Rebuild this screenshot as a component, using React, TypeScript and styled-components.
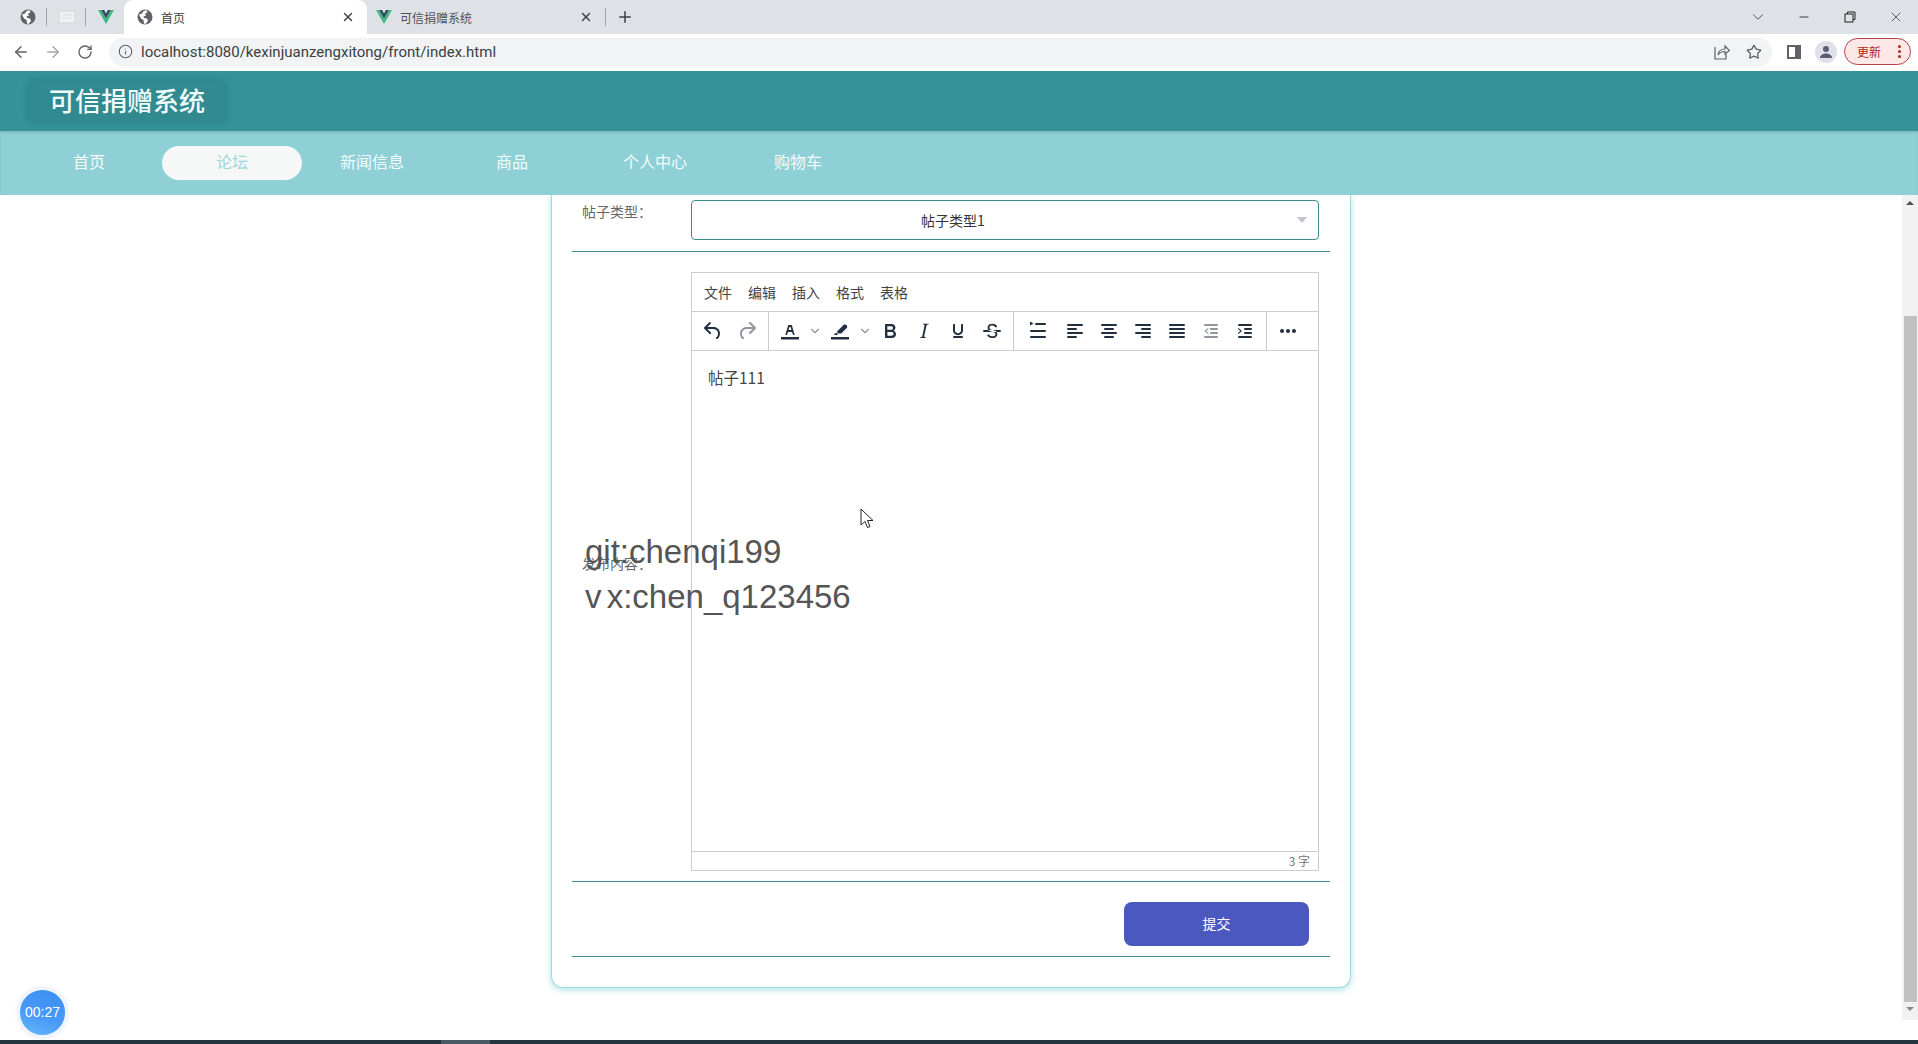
import React, { FunctionComponent, ReactElement } from 'react';
import styled, { createGlobalStyle } from 'styled-components';
import { ArrowLeft, ArrowRight, Info, Minus, Plus, RotateCw, Star, X, ChevronDown } from 'lucide-react';

const GlobalStyle = createGlobalStyle`
    html, body {
        margin: 0;
        padding: 0;
        background: #fff;
        overflow: hidden;
    }
    * {
        box-sizing: border-box;
    }
    #root {
        font-family: 'Noto Sans CJK SC', 'Liberation Sans', sans-serif;
    }
`;

const Page = styled.div`
    position: relative;
    width: 1918px;
    height: 1044px;
    display: flex;
    flex-direction: column;
    overflow: hidden;
`;

/* browser chrome */
const TabStrip = styled.div`
    height: 34px;
    flex: none;
    background: #dee1e6;
    display: flex;
    align-items: center;
    padding-left: 18px;
`;

const PinnedTab = styled.div`
    width: 19px;
    height: 18px;
    display: flex;
    align-items: center;
    justify-content: center;
`;

const TabDivider = styled.div<{ $gap: number }>`
    width: 1px;
    height: 18px;
    background: #9ea3a8;
    margin: 0 ${({ $gap }) => $gap}px 0 ${({ $gap }) => $gap - 1}px;
`;

const ActiveTab = styled.div`
    width: 243px;
    height: 34px;
    margin-left: 9px;
    padding: 0 12px 0 13px;
    background: #fff;
    border-radius: 9px 9px 0 0;
    display: flex;
    align-items: center;
    gap: 8px;
`;

const IdleTab = styled.div`
    width: 238px;
    height: 34px;
    padding: 0 12px 0 9px;
    display: flex;
    align-items: center;
    gap: 8px;
`;

const TabTitle = styled.span<{ $muted?: boolean }>`
    flex: 1;
    font-size: 12px;
    color: ${({ $muted }) => ($muted ? '#50545a' : '#3c4043')};
`;

const NewTab = styled.div`
    margin-left: 9px;
    display: flex;
    color: #3c4043;
`;

const WindowControls = styled.div`
    margin-left: auto;
    margin-right: -1px;
    display: flex;
    align-items: center;
    color: #222;
`;

const WindowButton = styled.div`
    width: 46px;
    height: 28px;
    display: flex;
    align-items: center;
    justify-content: center;
`;

const AddressBar = styled.div`
    height: 37px;
    flex: none;
    background: #fff;
    display: flex;
    align-items: center;
    padding: 0 7px 2px 5px;
`;

const NavIcon = styled.div<{ $dim?: boolean; $side?: boolean }>`
    width: 32px;
    height: 28px;
    margin-left: ${({ $side }) => ($side ? 6 : 0)}px;
    display: flex;
    align-items: center;
    justify-content: center;
    color: ${({ $dim }) => ($dim ? '#a5a8ac' : '#5f6368')};
`;

const Omnibox = styled.div`
    width: 1663px;
    height: 28px;
    margin-left: 8px;
    padding: 0 2px 0 9px;
    border-radius: 14px;
    background: #f1f3f4;
    display: flex;
    align-items: center;
    color: #5f6368;
`;

const UrlText = styled.span`
    margin-left: 8px;
    flex: 1;
    font-family: Roboto, 'Liberation Sans', sans-serif;
    font-size: 15px;
    color: #3c4043;
`;

const OmniAction = styled.div`
    width: 32px;
    display: flex;
    justify-content: center;
`;

const Avatar = styled.div`
    width: 22px;
    height: 22px;
    border-radius: 50%;
    background: #dfe0ea;
    display: flex;
    align-items: center;
    justify-content: center;
    margin: 0 7px 0 5px;
`;

const UpdateChip = styled.div`
    width: 67px;
    height: 27px;
    border: 1px solid #b3404a;
    border-radius: 14px;
    background: #fce8e6;
    color: #b3261e;
    font-size: 12px;
    display: flex;
    align-items: center;
    justify-content: space-between;
    padding: 0 9px 0 12px;
`;

const ChipDots = styled.div`
    display: flex;
    flex-direction: column;
    gap: 2px;
    i {
        width: 3px;
        height: 3px;
        border-radius: 50%;
        background: #b3261e;
    }
`;

/* site header */
const SiteHeader = styled.header`
    height: 60px;
    flex: none;
    background: #349298;
    padding: 10px 0 0 29px;
`;

const Logo = styled.div`
    width: 196px;
    height: 40px;
    border-radius: 4px;
    background: #308a90;
    box-shadow: 0 0 6px rgba(20, 90, 95, 0.35);
    color: #f0fbfb;
    font-size: 26px;
    font-weight: 500;
    line-height: 38px;
    text-align: center;
`;

const SiteNav = styled.nav`
    height: 64px;
    flex: none;
    background: #8fd0d6;
    box-shadow: inset 0 2px 2px rgba(40, 110, 115, 0.18);
    display: flex;
    align-items: center;
    padding: 0 0 0 19px;
`;

const NavItem = styled.a<{ $active?: boolean; $tight?: boolean }>`
    width: 140px;
    height: 34px;
    margin-left: ${({ $tight }) => ($tight ? 0 : 3)}px;
    border-radius: 17px;
    background: ${({ $active }) => ($active ? '#f6f8f8' : 'transparent')};
    color: ${({ $active }) => ($active ? '#9fd6da' : '#f2fbfb')};
    font-size: 16px;
    line-height: 31px;
    text-align: center;
    &:first-child {
        margin-left: 0;
    }
`;

/* page body */
const Body = styled.main`
    flex: 1;
    min-height: 0;
    display: flex;
    background: #fff;
`;

const Content = styled.div`
    flex: 1;
    display: flex;
    justify-content: center;
    overflow: hidden;
`;

const FormCard = styled.div`
    width: 800px;
    height: 793px;
    padding: 0 20px;
    background: #fff;
    border: 1px solid #9fdbe0;
    border-top: none;
    border-radius: 0 0 12px 12px;
    box-shadow: 0 2px 6px rgba(120, 205, 212, 0.6);
`;

const FormRow = styled.div<{ $top: number; $bottom: number }>`
    display: flex;
    align-items: center;
    padding: ${({ $top, $bottom }) => `${$top}px 11px ${$bottom}px 10px`};
    border-bottom: 1px solid #3f8d93;
`;

const FormLabel = styled.label`
    width: 109px;
    flex: none;
    margin-bottom: 18px;
    font-size: 14px;
    line-height: 20px;
    color: #666;
`;

const SelectBox = styled.div`
    width: 628px;
    height: 40px;
    border: 1px solid #3f8d93;
    border-radius: 4px;
    padding-right: 104px;
    font-size: 14px;
    line-height: 39px;
    color: #333;
    text-align: center;
    position: relative;
`;

const SelectCaret = styled.i`
    position: absolute;
    right: 11px;
    top: 16px;
    width: 0;
    height: 0;
    border-left: 5px solid transparent;
    border-right: 5px solid transparent;
    border-top: 6px solid #c0c4cc;
`;

const Editor = styled.div`
    width: 628px;
    height: 599px;
    border: 1px solid #ccc;
    display: flex;
    flex-direction: column;
`;

const MenuBar = styled.div`
    height: 39px;
    flex: none;
    padding-left: 4px;
    display: flex;
    align-items: center;
    border-bottom: 1px solid #ccc;
`;

const MenuItem = styled.span`
    padding: 0 8px;
    font-size: 14px;
    color: #444;
`;

const ToolBar = styled.div`
    height: 39px;
    flex: none;
    display: flex;
    border-bottom: 1px solid #ccc;
`;

const ToolGroup = styled.div<{ $last?: boolean }>`
    display: flex;
    align-items: center;
    padding: 0 4px;
    border-right: ${({ $last }) => ($last ? 'none' : '1px solid #ccc')};
`;

const ToolButton = styled.div<{ $dim?: boolean; $size?: number }>`
    width: ${({ $size }) => $size ?? 34}px;
    height: 34px;
    display: flex;
    align-items: center;
    justify-content: center;
    color: #222f3e;
    opacity: ${({ $dim }) => ($dim ? 0.5 : 1)};
    svg {
        fill: currentColor;
        flex: none;
    }
    svg.lucide {
        fill: none;
    }
`;

const EditArea = styled.div`
    flex: 1;
    padding: 16px 16px;
    font-size: 15.5px;
    line-height: 20px;
    color: #444;
`;

const StatusBar = styled.div`
    height: 19px;
    flex: none;
    border-top: 1px solid #ccc;
    padding-right: 8px;
    font-size: 12px;
    line-height: 18px;
    color: #777;
    text-align: right;
`;

const SubmitButton = styled.button`
    display: block;
    width: 185px;
    height: 44px;
    margin-left: auto;
    margin-right: 10px;
    padding: 0 0 2px;
    border: none;
    border-radius: 8px;
    background: #4a58c0;
    color: #fff;
    font-family: inherit;
    font-size: 14px;
`;

const ScrollBar = styled.div`
    width: 16px;
    height: 825px;
    flex: none;
    background: #f1f1f1;
    display: flex;
    flex-direction: column;
    align-items: center;
`;

const ScrollArrow = styled.i<{ $down?: boolean }>`
    width: 0;
    height: 0;
    margin: ${({ $down }) => ($down ? '5px 0 0' : '6px 0 0')};
    border-left: 4px solid transparent;
    border-right: 4px solid transparent;
    ${({ $down }) => ($down ? 'border-top: 4px solid #8a8a8a;' : 'border-bottom: 4px solid #505050;')}
`;

const ScrollThumb = styled.div`
    width: 13px;
    height: 686px;
    margin-top: 111px;
    margin-left: 1px;
    background: #c0c0c0;
`;

const Taskbar = styled.div`
    height: 4px;
    flex: none;
    background: #233640;
    padding-left: 441px;
    i {
        display: block;
        width: 49px;
        height: 4px;
        background: #4a5a62;
    }
`;

/* things lying over the page */
const Watermark = styled.div`
    position: absolute;
    left: 585px;
    top: 529px;
    font-family: 'Liberation Sans', sans-serif;
    font-size: 33px;
    line-height: 45px;
    word-spacing: -4px;
    color: #555;
    pointer-events: none;
`;

const CursorMark = styled.svg`
    position: absolute;
    left: 860px;
    top: 508px;
`;

const TimerBadge = styled.div`
    position: absolute;
    left: 18px;
    top: 988px;
    width: 49px;
    height: 49px;
    border: 2px solid #eef5fd;
    border-radius: 50%;
    background: linear-gradient(200deg, #3a8cf2 0%, #4a9bf8 60%, #67bafc 100%);
    box-shadow: 0 0 4px rgba(120, 160, 210, 0.35);
    color: #fff;
    font-family: 'Liberation Sans', sans-serif;
    font-size: 14px;
    line-height: 45px;
    text-align: center;
`;

const GlobeIcon: FunctionComponent = (): ReactElement => (
    <svg width="16" height="16" viewBox="0 0 16 16">
        <circle cx="8" cy="8" r="7.5" fill="#5f6368" />
        <path d="M2 5.5 5 4.5 6.5 2 9.5 1.2 10.5 3 8 5 9 6.5 6.5 7.5 7 9 10 9.5 11 12 8.5 15 7 14.5 6.5 11 4 9.5z" fill="#fff" />
    </svg>
);

const VueIcon: FunctionComponent = (): ReactElement => (
    <svg width="16" height="16" viewBox="0 0 16 16">
        <path d="M0 1h3.2L8 9.5 12.8 1H16L8 15z" fill="#41b883" />
        <path d="M3.2 1h2.9L8 4.6 9.9 1h2.9L8 9.5z" fill="#35495e" />
    </svg>
);

const PageIcon: FunctionComponent = (): ReactElement => (
    <svg width="18" height="16" viewBox="0 0 18 16">
        <rect x="1" y="2" width="16" height="12" fill="#eef0f2" stroke="#d3d6da" />
        <path d="M4 6h10M4 9h10" stroke="#dcdfe2" />
    </svg>
);

const RestoreIcon: FunctionComponent = (): ReactElement => (
    <svg width="12" height="12" viewBox="0 0 12 12" fill="none" stroke="#222">
        <rect x="1" y="3" width="8" height="8" />
        <path d="M3.5 3V1h7.5v7.5H9" />
    </svg>
);

const ShareIcon: FunctionComponent = (): ReactElement => (
    <svg width="16" height="16" viewBox="0 0 16 16" fill="none" stroke="#5f6368" strokeWidth="1.2">
        <path d="M1 3v12h11V10" />
        <path d="M4 11c.5-4 3-6 7-6V2l4.5 4.5L11 10V7.5c-3 0-5.500 1-7 3.500z" />
    </svg>
);

const PanelIcon: FunctionComponent = (): ReactElement => (
    <svg width="14" height="14" viewBox="0 0 14 14">
        <rect x="0" y="0" width="14" height="14" fill="#5f6368" />
        <rect x="2" y="2" width="6" height="10" fill="#fff" />
    </svg>
);

const PersonIcon: FunctionComponent = (): ReactElement => (
    <svg width="14" height="14" viewBox="0 0 14 14" fill="#5a5e72">
        <circle cx="7" cy="4" r="3" />
        <path d="M1 13c0-3 3-4.500 6-4.500s6 1.500 6 4.500z" />
    </svg>
);

const Bars: FunctionComponent<{ rows: number[][]; extra?: string }> = ({ rows, extra }): ReactElement => (
    <svg width="24" height="24" viewBox="0 0 24 24">
        {rows.map(
            ([x, y, w]: number[]): ReactElement => (
                <rect key={`${x}-${y}`} x={x} y={y} width={w} height="2" rx="1" />
            )
        )}
        {extra && <path d={extra} />}
    </svg>
);

const Glyph: FunctionComponent<{ d: string }> = ({ d }): ReactElement => (
    <svg width="24" height="24" viewBox="0 0 24 24">
        <path d={d} fillRule="evenodd" />
    </svg>
);

const UNDO = 'M6.4 8H12c3.7 0 6.2 2 6.8 5.1.6 2.7-.4 5.6-2.3 6.8a1 1 0 01-1-1.8c1.1-.6 1.8-2.7 1.4-4.6-.5-2.1-2.1-3.500-4.900-3.500H6.400l3.300 3.300a1 1 0 11-1.400 1.400l-5-5a1 1 0 010-1.400l5-5a1 1 0 011.400 1.400L6.400 8z';
const REDO = 'M17.600 10H12c-2.800 0-4.400 1.400-4.900 3.500-.4 2 .3 4 1.400 4.600a1 1 0 11-1 1.800c-2-1.200-2.900-4.100-2.300-6.800.6-3.100 3.100-5.100 6.800-5.100h5.600l-3.300-3.300a1 1 0 111.400-1.400l5 5a1 1 0 010 1.400l-5 5a1 1 0 01-1.400-1.400l3.300-3.300z';
const BOLD = 'M7.800 19c-.3 0-.5 0-.6-.2l-.2-.5V5.700c0-.2 0-.4.2-.5l.6-.2h5c1.500 0 2.700.3 3.500 1 .7.600 1.100 1.400 1.100 2.500a3 3 0 01-.6 1.900c-.4.600-1 1-1.600 1.200.4.100.9.300 1.300.6s.8.700 1 1.200c.4.400.5 1 .5 1.600 0 1.300-.4 2.300-1.300 3-.8.700-2.100 1-3.800 1H7.800zm5-8.300c.6 0 1.200-.1 1.600-.5.4-.3.6-.7.6-1.300 0-1.100-.8-1.700-2.300-1.700H9.300v3.500h3.500zm.5 6c.7 0 1.300-.1 1.700-.4.4-.4.6-.9.6-1.500s-.2-1-.7-1.400c-.4-.3-1-.4-2-.4H9.400v3.700h3.900z';
const ITALIC = 'M16.700 4.700l-.1.900h-.3c-.6 0-1 0-1.400.3-.3.300-.4.600-.5 1.100l-2.100 9.800v.6c0 .5.400.8 1.400.8h.2l-.2.8H8l.2-.8h.2c1.100 0 1.800-.5 2-1.500l2-9.800.1-.5c0-.6-.4-.8-1.400-.8h-.3l.2-.9h5.700z';
const UNDERLINE = 'M16 5c.6 0 1 .4 1 1v5.500a4 4 0 01-.4 1.800l-1 1.400a5.300 5.300 0 01-5.500 1 5 5 0 01-1.600-1c-.5-.4-.8-.9-1.100-1.400a4 4 0 01-.4-1.800V6c0-.6.4-1 1-1s1 .4 1 1v5.500c0 .3 0 .6.200 1l.6.700a3.300 3.300 0 004.400 0c.3-.2.400-.5.600-.8l.2-.9V6c0-.6.400-1 1-1zM8 17h8c.6 0 1 .4 1 1s-.4 1-1 1H8a1 1 0 010-2z';
const STRIKE = 'M15.600 8.500c-.5-.7-1-1.100-1.300-1.300-.6-.4-1.300-.6-2-.6-2.700 0-2.800 1.700-2.800 2.100 0 1.600 1.800 2 3.200 2.300 4.400.9 4.600 2.800 4.600 3.900 0 1.400-.7 4.100-5 4.100A6.200 6.200 0 017 16.400l1.500-1.100c.4.600 1.600 2 3.700 2 1.600 0 2.500-.4 3-1 .3-.4.300-.8.300-1.200 0-1.600-2.200-2.100-3.400-2.300-1.500-.4-4.500-1-4.500-4 0-.9.400-4 4.700-4a6.700 6.700 0 015 2.300l-1.200 1.400zM20 13H4a1 1 0 010-2h16a1 1 0 010 2z';
const TEXT_COLOR = 'M3 18h18v2.500H3zM8.700 16h-.8a.5.5 0 01-.5-.6l2.700-9c.1-.3.3-.4.5-.4h2.800c.2 0 .4.100.5.400l2.700 9a.5.500 0 01-.5.600h-.8a.5.5 0 01-.4-.4l-.7-2.200c0-.2-.3-.4-.5-.4h-3.400c-.2 0-.4.200-.5.400l-.7 2.200c0 .200-.3.400-.4.400zm2.600-7.600l-.6 2a.5.5 0 00.500.600h1.600a.5.5 0 00.500-.6l-.6-2c0-.300-.3-.400-.500-.400h-.400c-.200 0-.400.200-.500.400z';
const HIGHLIGHT = 'M3 18h18v2.500H3zM15.500 6c1-.8 2.500-.5 3.200.3s.7 2 0 2.800l-5.500 5.400h-3L9 12.500zM8.500 13.500l1.500 1.500-1 1H5.500z';

const ALIGN_LEFT: number[][] = [
    [4, 5, 16],
    [4, 9, 10],
    [4, 13, 16],
    [4, 17, 10],
];

const App: FunctionComponent = (): ReactElement => {
    return (
        <Page>
            <GlobalStyle />
            <TabStrip>
                <PinnedTab>
                    <GlobeIcon />
                </PinnedTab>
                <TabDivider $gap={10} />
                <PinnedTab>
                    <PageIcon />
                </PinnedTab>
                <TabDivider $gap={10} />
                <PinnedTab>
                    <VueIcon />
                </PinnedTab>
                <ActiveTab>
                    <GlobeIcon />
                    <TabTitle>首页</TabTitle>
                    <X size={14} strokeWidth={2.5} color="#3c4043" />
                </ActiveTab>
                <IdleTab>
                    <VueIcon />
                    <TabTitle $muted>可信捐赠系统</TabTitle>
                    <X size={14} strokeWidth={2.5} color="#3c4043" />
                </IdleTab>
                <TabDivider $gap={1} />
                <NewTab>
                    <Plus size={18} strokeWidth={2} />
                </NewTab>
                <WindowControls>
                    <WindowButton>
                        <ChevronDown size={18} strokeWidth={1} />
                    </WindowButton>
                    <WindowButton>
                        <Minus size={14} strokeWidth={1.5} />
                    </WindowButton>
                    <WindowButton>
                        <RestoreIcon />
                    </WindowButton>
                    <WindowButton>
                        <X size={16} strokeWidth={1} />
                    </WindowButton>
                </WindowControls>
            </TabStrip>
            <AddressBar>
                <NavIcon>
                    <ArrowLeft size={18} strokeWidth={2} />
                </NavIcon>
                <NavIcon $dim>
                    <ArrowRight size={18} strokeWidth={2} />
                </NavIcon>
                <NavIcon>
                    <RotateCw size={16} strokeWidth={2} />
                </NavIcon>
                <Omnibox>
                    <Info size={15} strokeWidth={1.8} />
                    <UrlText>localhost:8080/kexinjuanzengxitong/front/index.html</UrlText>
                    <OmniAction>
                        <ShareIcon />
                    </OmniAction>
                    <OmniAction>
                        <Star size={16} strokeWidth={2} />
                    </OmniAction>
                </Omnibox>
                <NavIcon $side>
                    <PanelIcon />
                </NavIcon>
                <Avatar>
                    <PersonIcon />
                </Avatar>
                <UpdateChip>
                    更新
                    <ChipDots>
                        <i />
                        <i />
                        <i />
                    </ChipDots>
                </UpdateChip>
            </AddressBar>
            <SiteHeader>
                <Logo>可信捐赠系统</Logo>
            </SiteHeader>
            <SiteNav>
                <NavItem>首页</NavItem>
                <NavItem $active>论坛</NavItem>
                <NavItem $tight>新闻信息</NavItem>
                <NavItem $tight>商品</NavItem>
                <NavItem>个人中心</NavItem>
                <NavItem>购物车</NavItem>
            </SiteNav>
            <Body>
                <Content>
                    <FormCard>
                        <FormRow $top={5} $bottom={11}>
                            <FormLabel>帖子类型：</FormLabel>
                            <SelectBox>
                                帖子类型1
                                <SelectCaret />
                            </SelectBox>
                        </FormRow>
                        <FormRow $top={20} $bottom={10}>
                            <FormLabel>发布内容：</FormLabel>
                            <Editor>
                                <MenuBar>
                                    {['文件', '编辑', '插入', '格式', '表格'].map(
                                        (item: string): ReactElement => (
                                            <MenuItem key={item}>{item}</MenuItem>
                                        )
                                    )}
                                </MenuBar>
                                <ToolBar>
                                    <ToolGroup>
                                        <ToolButton>
                                            <Glyph d={UNDO} />
                                        </ToolButton>
                                        <ToolButton $dim>
                                            <Glyph d={REDO} />
                                        </ToolButton>
                                    </ToolGroup>
                                    <ToolGroup>
                                        <ToolButton>
                                            <Glyph d={TEXT_COLOR} />
                                        </ToolButton>
                                        <ToolButton $size={16} $dim>
                                            <ChevronDown size={14} strokeWidth={2} />
                                        </ToolButton>
                                        <ToolButton>
                                            <Glyph d={HIGHLIGHT} />
                                        </ToolButton>
                                        <ToolButton $size={16} $dim>
                                            <ChevronDown size={14} strokeWidth={2} />
                                        </ToolButton>
                                        <ToolButton>
                                            <Glyph d={BOLD} />
                                        </ToolButton>
                                        <ToolButton>
                                            <Glyph d={ITALIC} />
                                        </ToolButton>
                                        <ToolButton>
                                            <Glyph d={UNDERLINE} />
                                        </ToolButton>
                                        <ToolButton>
                                            <Glyph d={STRIKE} />
                                        </ToolButton>
                                    </ToolGroup>
                                    <ToolGroup>
                                        <ToolButton $size={40}>
                                            <Bars
                                                rows={[[9, 4, 11], [4, 11, 16], [4, 17, 16]]}
                                                extra="M4 2.500v4l3.500-2z"
                                            />
                                        </ToolButton>
                                        <ToolButton>
                                            <Bars rows={ALIGN_LEFT} />
                                        </ToolButton>
                                        <ToolButton>
                                            <Bars rows={[[4, 5, 16], [7, 9, 10], [4, 13, 16], [7, 17, 10]]} />
                                        </ToolButton>
                                        <ToolButton>
                                            <Bars rows={[[4, 5, 16], [10, 9, 10], [4, 13, 16], [10, 17, 10]]} />
                                        </ToolButton>
                                        <ToolButton>
                                            <Bars rows={[[4, 5, 16], [4, 9, 16], [4, 13, 16], [4, 17, 16]]} />
                                        </ToolButton>
                                        <ToolButton $dim>
                                            <Bars
                                                rows={[[5, 5, 14], [11, 9, 8], [11, 13, 8], [5, 17, 14]]}
                                                extra="M9 9l-3.500 3L9 15l.7-.7L7.200 12l2.500-2.300z"
                                            />
                                        </ToolButton>
                                        <ToolButton>
                                            <Bars
                                                rows={[[5, 5, 14], [11, 9, 8], [11, 13, 8], [5, 17, 14]]}
                                                extra="M5.500 9L9 12l-3.500 3-.7-.7L7.300 12 4.800 9.700z"
                                            />
                                        </ToolButton>
                                    </ToolGroup>
                                    <ToolGroup $last>
                                        <ToolButton>
                                            <svg width="24" height="24" viewBox="0 0 24 24">
                                                <circle cx="6" cy="12" r="2" />
                                                <circle cx="12" cy="12" r="2" />
                                                <circle cx="18" cy="12" r="2" />
                                            </svg>
                                        </ToolButton>
                                    </ToolGroup>
                                </ToolBar>
                                <EditArea>帖子111</EditArea>
                                <StatusBar>3 字</StatusBar>
                            </Editor>
                        </FormRow>
                        <FormRow $top={20} $bottom={10}>
                            <SubmitButton>提交</SubmitButton>
                        </FormRow>
                    </FormCard>
                </Content>
                <ScrollBar>
                    <ScrollArrow />
                    <ScrollThumb />
                    <ScrollArrow $down />
                </ScrollBar>
            </Body>
            <Taskbar>
                <i />
            </Taskbar>
            <Watermark>
                git:chenqi199
                <br />
                v x:chen_q123456
            </Watermark>
            <CursorMark width="16" height="22" viewBox="0 0 16 22">
                <path d="M1 1v16l4-3.500 2.500 6 2.500-1-2.500-6H13z" fill="#fff" stroke="#222" strokeWidth="1" />
            </CursorMark>
            <TimerBadge>00:27</TimerBadge>
        </Page>
    );
};

export default App;
